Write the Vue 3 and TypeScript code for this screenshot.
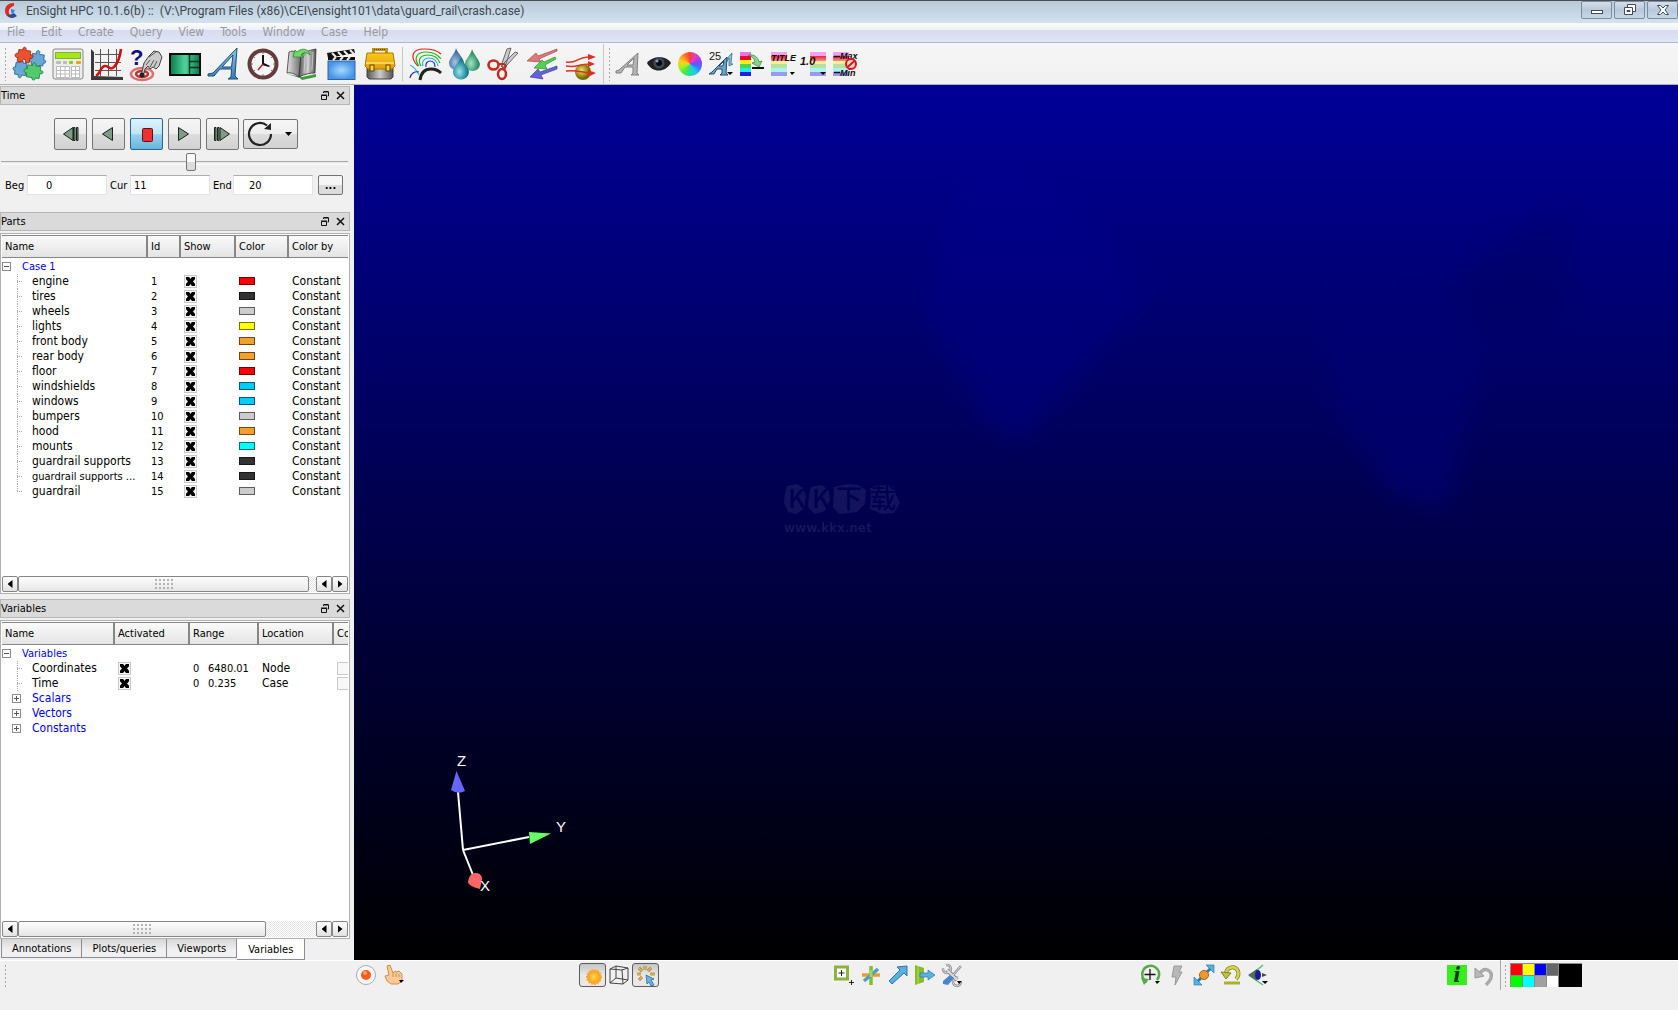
<script setup lang="ts">
import { ref } from 'vue'

interface Part {
  name: string
  id: number
  color: string
  shown: boolean
}

const menus = ['File', 'Edit', 'Create', 'Query', 'View', 'Tools', 'Window', 'Case', 'Help']

const parts = ref<Part[]>([
  { name: 'engine', id: 1, color: '#ff0000', shown: true },
  { name: 'tires', id: 2, color: '#333333', shown: true },
  { name: 'wheels', id: 3, color: '#cccccc', shown: true },
  { name: 'lights', id: 4, color: '#ffff00', shown: true },
  { name: 'front body', id: 5, color: '#f4a02c', shown: true },
  { name: 'rear body', id: 6, color: '#f4a02c', shown: true },
  { name: 'floor', id: 7, color: '#ff0000', shown: true },
  { name: 'windshields', id: 8, color: '#00ccff', shown: true },
  { name: 'windows', id: 9, color: '#00ccff', shown: true },
  { name: 'bumpers', id: 10, color: '#cccccc', shown: true },
  { name: 'hood', id: 11, color: '#f4a02c', shown: true },
  { name: 'mounts', id: 12, color: '#00ffff', shown: true },
  { name: 'guardrail supports', id: 13, color: '#333333', shown: true },
  { name: 'guardrail supports ...', id: 14, color: '#333333', shown: true },
  { name: 'guardrail', id: 15, color: '#cccccc', shown: true },
])

const variables = ref([
  { name: 'Coordinates', active: true, min: '0', max: '6480.01', location: 'Node' },
  { name: 'Time', active: true, min: '0', max: '0.235', location: 'Case' },
])
const groups = ['Scalars', 'Vectors', 'Constants']

const tabs = ['Annotations', 'Plots/queries', 'Viewports', 'Variables']
const activeTab = ref('Variables')

const begin = ref('0')
const current = ref('11')
const end = ref('20')
const step = ref(11)

const swatches = ['#ff0000', '#ffff00', '#0000ff', '#666666', '#00ff00', '#00ffff', '#a0a0a0', '#ffffff']
</script>

<template>
  <div class="app">
    <svg class="defs" aria-hidden="true">
      <defs>
        <linearGradient id="gGreen" x1="0" x2="1"><stop offset="0" stop-color="#067a50" /><stop offset=".5" stop-color="#4fd39a" /><stop offset="1" stop-color="#0a7a4a" /></linearGradient>
        <linearGradient id="gBlue" x1="0" y1="0" x2="0" y2="1"><stop offset="0" stop-color="#8cc8ec" /><stop offset="1" stop-color="#2f7fb4" /></linearGradient>
        <radialGradient id="gSky"><stop offset="0" stop-color="#a8d8ff" /><stop offset="1" stop-color="#4595e6" /></radialGradient>
        <linearGradient id="gGold" x1="0" y1="0" x2="0" y2="1"><stop offset="0" stop-color="#fbc81c" /><stop offset="1" stop-color="#e0a008" /></linearGradient>
        <linearGradient id="gSteel" x1="0" x2="1"><stop offset="0" stop-color="#555" /><stop offset=".5" stop-color="#ccc" /><stop offset="1" stop-color="#555" /></linearGradient>
        <linearGradient id="gPage" x1="0" x2="1"><stop offset="0" stop-color="#e4e4e4" /><stop offset="1" stop-color="#6c6c6c" /></linearGradient>
        <linearGradient id="gRainbow" x1="0" y1="0" x2="0" y2="1">
          <stop offset="0" stop-color="#f2a0f2" /><stop offset=".18" stop-color="#f2a0f2" /><stop offset=".18" stop-color="#ee2a3c" /><stop offset=".36" stop-color="#f08a8a" />
          <stop offset=".36" stop-color="#f6ee90" /><stop offset=".52" stop-color="#f3f0a4" /><stop offset=".52" stop-color="#b8e0a0" /><stop offset=".66" stop-color="#b8e0a0" />
          <stop offset=".66" stop-color="#a8f2f0" /><stop offset=".82" stop-color="#a8f2f0" /><stop offset=".82" stop-color="#9a9af0" /><stop offset="1" stop-color="#9a9af0" />
        </linearGradient>
        <radialGradient id="gDropA" cx=".4" cy=".65"><stop offset="0" stop-color="#a8c4e4" /><stop offset="1" stop-color="#3c6ca4" /></radialGradient>
        <radialGradient id="gDropB" cx=".4" cy=".65"><stop offset="0" stop-color="#a4e4c4" /><stop offset="1" stop-color="#2c8c64" /></radialGradient>
        <radialGradient id="gDropC" cx=".4" cy=".65"><stop offset="0" stop-color="#9ce4ec" /><stop offset="1" stop-color="#14808c" /></radialGradient>
        <radialGradient id="gBall" cx=".4" cy=".4"><stop offset="0" stop-color="#f0e860" /><stop offset="1" stop-color="#786c08" /></radialGradient>
        <radialGradient id="gSun"><stop offset="0" stop-color="#ffd84a" /><stop offset="1" stop-color="#f79a1c" /></radialGradient>
      </defs>
    </svg>

    <header class="titlebar">
      <svg class="logo" width="16" height="16" viewBox="0 0 16 16"><path d="M12 0C6 0 3 3 3 8c0 4 3 7 8 7l3-2C8 13 6 11 7 7c1-2 3-4 5-4z" fill="#e02a20" /><path d="M5 12c2 3 6 4 10 1l-3-3c-2 1-4 2-7 2z" fill="#284c9c" /><path d="M9 6l4 1-2 4-2-1z" fill="#3a8ccc" /></svg>
      <h1>EnSight HPC 10.1.6(b) ::&nbsp; (V:\Program Files (x86)\CEI\ensight101\data\guard_rail\crash.case)</h1>
      <div class="winctl">
        <button type="button" aria-label="Minimize"><svg width="14" height="10" viewBox="0 0 14 10"><rect x="1.500" y="5.500" width="11" height="3" fill="#fff" stroke="#444a58" /></svg></button>
        <button type="button" aria-label="Restore"><svg width="14" height="12" viewBox="0 0 14 12"><path d="M4.500 3.500v-3h8v7h-3" fill="#fff" stroke="#444a58" /><path d="M1.500 3.500h8v7h-8zM4 6.500h3v1H4z" fill="#fff" stroke="#444a58" /></svg></button>
        <button type="button" aria-label="Close"><svg width="14" height="12" viewBox="0 0 14 12"><path d="M1.500 1.500h3L7 4l2.500-2.500h3L9 6l3.500 4.500h-3L7 8l-2.500 2.500h-3L5 6z" fill="#fff" stroke="#444a58" /></svg></button>
      </div>
    </header>

    <nav class="menubar">
      <button v-for="m in menus" :key="m" type="button">{{ m }}</button>
    </nav>

    <div class="toolbar">
      <i class="grip"></i>
      <div class="tools big">
        <button type="button" aria-label="Parts">
          <svg viewBox="0 0 32 32">
            <g transform="rotate(8 16 16)" stroke-width=".8">
              <path d="M18 5h4c-2-4 4-5 3-1v1h5v5c3-1 3 4 0 3v3h-4c0 4-4 3-4 0h-4v-3c-4 1-4-4 0-3z" fill="#68a8d4" stroke="#2c6490" />
              <path d="M3 16h4c-2-4 4-4 3 0h4v4c4-1 4 4 0 3v5h-4c1 4-4 4-3 0H3v-4c-3 1-3-4 0-3z" fill="#68a8d4" stroke="#2c6490" />
              <path d="M4 3h4c-1-4 4-4 3 0h5v4c4-2 4 4 0 3v5h-4c1-4-4-4-3 0H4v-4c-4 1-4-5 0-4z" fill="#ee5030" stroke="#982810" />
              <path d="M15 17h5c-2-4 4-4 3 0h5v4c4-1 4 4 0 3v5h-4c1 3-4 3-3 0h-6v-4c-4 1-4-5 0-4z" fill="#50cc6c" stroke="#208040" />
            </g>
          </svg>
        </button>
        <button type="button" aria-label="Calculator">
          <svg viewBox="0 0 32 32">
            <rect x="1" y="1" width="30" height="30" rx="2" fill="#ececec" stroke="#888" /><rect x="3.500" y="4.500" width="25" height="6" fill="#a4e81c" stroke="#84b420" />
            <g fill="#bbb"><rect x="4" y="13" width="5" height="3" rx="1" /><rect x="11" y="13" width="4" height="3" rx="1" /><rect x="17" y="13" width="4" height="3" rx="1" fill="#8cc820" /><rect x="24" y="13" width="5" height="3" rx="1" fill="#f0a020" /></g>
            <path d="M4.500 18.500h13v11h-13zM19.500 18.500h8v11h-8zM8.500 18v11M13 18v11M4 22.500h13M4 26h13M23.500 18v11M19 22.500h9M19 26h9" fill="#fff" stroke="#bbb" />
          </svg>
        </button>
        <button type="button" aria-label="Plot">
          <svg viewBox="0 0 32 32"><path d="M4 6.500h26M4 14.500h26M4 22.500h26M9.500 1v27M17.500 1v27M25.500 1v27" stroke="#555" fill="none" /><path d="M0 1l3 3v24l29 1v3H0z" fill="#3a3a3a" /><path d="M5 28c4-2 5-10 9-10 5 0 4 5 9 1 4-4 6-10 7-18" fill="none" stroke="#d01010" stroke-width="2.600" /></svg>
        </button>
        <button type="button" aria-label="Query">
          <svg viewBox="0 0 32 32">
            <g fill="none" stroke="#d87070" stroke-width="2.500"><ellipse cx="12" cy="26" rx="11" ry="6" /><ellipse cx="12" cy="26" rx="6" ry="3" stroke="#c03030" /></g>
            <path d="M11 28l3-13 5-7 5-5 5 1 3 5-3 9-3 3-3-2-3 2-2-3-3 3-2 8z" fill="#ccc" stroke="#444" /><path d="M16 17l4-5M20 19l4-7M24 19l3-6M19 9l7-5" stroke="#555" fill="none" /><circle cx="12" cy="27" r="2.500" fill="#222" />
            <text x="0" y="17" font-family="Liberation Sans" font-weight="700" font-size="22" fill="#101080">?</text>
          </svg>
        </button>
        <button type="button" aria-label="Viewports">
          <svg viewBox="0 0 32 32"><rect x="1" y="6" width="30" height="21" fill="url(#gGreen)" stroke="#0a0a0a" stroke-width="2" /><path d="M20.500 7v19M21 13.500h9M21 19.500h9" stroke="#033822" stroke-width="1.500" /></svg>
        </button>
        <button type="button" aria-label="Annotation">
          <svg viewBox="0 0 32 32"><path d="M29 0l-2 28 3 3H20l3-2 .500-8H12l-6 7H0v-2l5-1zM14 19h9.500L25 7z" fill="url(#gBlue)" stroke="#1c4c74" /></svg>
        </button>
        <button type="button" aria-label="Time">
          <svg viewBox="0 0 32 32"><circle cx="16" cy="16" r="13.500" fill="#f6f6f6" stroke="#643c3c" stroke-width="4" /><path d="M16 4v2M16 26v2M4 16h2M26 16h2M7 9l1 1M25 9l-1 1M7 23l1-1M25 23l-1-1" stroke="#777" /><path d="M15 7l2 0v8l6 3-1 1-7-2z" fill="#111" /><path d="M16 16l-5 6" stroke="#c02020" stroke-width="1.500" /></svg>
        </button>
        <button type="button" aria-label="Flipbook">
          <svg viewBox="0 0 32 32"><path d="M1 26l13 4 2 2 14-3V26L16 29z" fill="#3c9c3c" /><path d="M3 4c4-2 8 0 12 3l-2 22C9 26 5 24 1 25z" fill="url(#gPage)" stroke="#333" stroke-width=".8" /><path d="M15 7c5-4 10-5 15-6l-1 24c-5 0-10 1-16 4z" fill="url(#gSteel)" stroke="#333" stroke-width=".8" /><path d="M19 8l-1 17M23 5l-1 18M27 4l-1 18" stroke="#ddd" stroke-width=".7" /><path d="M7 9L9 2l2 2c5-5 12-3 13 3-3-3-7-3-9 0l3 2z" fill="#70d868" stroke="#2c8c2c" stroke-width=".8" /></svg>
        </button>
        <button type="button" aria-label="Keyframe">
          <svg viewBox="0 0 32 32"><rect x="3" y="13" width="27" height="18.500" fill="url(#gSky)" stroke="#2c64a8" /><path d="M2 5l27-4 1 4-27 5zM3 9h27v3H3z" fill="#111" /><path d="M7 5l4 4M13 4l4 4M19 3l4 4M25 2l4 4M8 12l3-3M15 12l3-3M22 12l3-3" stroke="#eee" stroke-width="2" /></svg>
        </button>
        <button type="button" aria-label="Toolbox">
          <svg viewBox="0 0 32 32"><path d="M3 19h26v10l-2 2H5l-2-2z" fill="url(#gSteel)" stroke="#444" /><path d="M9.500 6V1.500h13V6" fill="none" stroke="#c49410" stroke-width="3" /><path d="M10 1.500h12" stroke="#604804" stroke-dasharray="1 1" /><path d="M3 5h26l2 13-3 3H4l-3-3z" fill="url(#gGold)" stroke="#a87804" /><path d="M2 15h28" stroke="#fbe070" stroke-width="1.500" /><rect x="6" y="17" width="4" height="6" fill="#f8d040" stroke="#604804" /><rect x="22" y="17" width="4" height="6" fill="#f8d040" stroke="#604804" /></svg>
        </button>
      </div>
      <i class="rule"></i>
      <div class="tools big">
        <button type="button" aria-label="Contours">
          <svg viewBox="0 0 32 32"><g fill="none" stroke-width="1.200"><path d="M9 18C1 10 2 1 15 1c8 0 14 2 17 5" stroke="#e02020" /><path d="M10 18C4 10 8 4 17 4c7 0 12 3 15 7M12 18C8 11 12 7 19 7c6 0 10 3 12 8" stroke="#20b820" /><path d="M14 18c-2-5 2-8 6-8 5 0 8 3 9 8M1 17c5 2 7 6 9 10" stroke="#18c4d0" /><path d="M17 19c-1-4 2-6 4-6 4 0 5 3 5 6M1 30c1-5 5-7 9-6" stroke="#2828c0" /></g><path d="M11 32c1-7 5-11 11-11 4 0 7 1 10 4" fill="none" stroke="#222" stroke-width="3" /></svg>
        </button>
        <button type="button" aria-label="Isosurfaces">
          <svg viewBox="0 0 32 32"><path d="M8 0c2 6 8 10 8 15a7.500 7 0 0 1-15 0C1 10 7 6 8 0z" fill="url(#gDropA)" /><path d="M24 1c2 6 7 10 8 15a7.500 7 0 0 1-15 0C17 11 23 7 24 1z" fill="url(#gDropB)" /><path d="M13 9c1 5 8 10 8 15a8 7.500 0 0 1-16 0c0-5 7-10 8-15z" fill="url(#gDropC)" /></svg>
        </button>
        <button type="button" aria-label="Clip">
          <svg viewBox="0 0 32 32"><path d="M14 18L20 1l4-1-5 16-3 4zM15 17L28 4l3 1-11 12-4 3z" fill="#ccc" stroke="#666" /><g fill="none" stroke="#c02c20" stroke-width="2.600"><ellipse cx="6.500" cy="17" rx="5" ry="4.500" /><ellipse cx="15" cy="26" rx="4" ry="5" /></g><path d="M11 16l6 0 2 2-2 4" fill="none" stroke="#c02c20" stroke-width="2" /></svg>
        </button>
        <button type="button" aria-label="Vector arrows">
          <svg viewBox="0 0 32 32" stroke-width=".6"><path d="M31 1l0 2-18 8 2 3-14-1 9-8 2 3z" fill="#e07878" stroke="#903c3c" /><path d="M29 9l1 2-11 6 2 4-13-1 8-8 2 2z" fill="#50d050" stroke="#288028" /><path d="M31 18l0 3-16 6 2 4-13-2 8-8 2 3z" fill="#6464d4" stroke="#303090" /></svg>
        </button>
        <button type="button" aria-label="Particle traces">
          <svg viewBox="0 0 32 32"><circle cx="18" cy="24" r="8" fill="url(#gBall)" /><path d="M1 14c11 2 12-6 24-5M1 18c11 2 12-2 24-2M1 23c11-1 14 1 24 2" fill="none" stroke="#e03020" stroke-width="1.500" /><path d="M23 6l8 3-8 3zM23 13l7 3-7 3zM23 22l8 3-8 4z" fill="#e03020" /></svg>
        </button>
      </div>
      <i class="rule far"></i>
      <i class="grip"></i>
      <div class="tools small">
        <button type="button" aria-label="Text style">
          <svg viewBox="0 0 24 24"><path d="M22 1l-1 20 2 2h-8l2-2v-6H9l-4 6H0v-2l3-1zM11 13h6l1-7z" fill="#b4b4b4" stroke="#808080" /></svg>
        </button>
        <button type="button" aria-label="Visibility">
          <svg viewBox="0 0 24 24"><path d="M0 11C5 4 19 3 24 11 18 21 5 21 0 11z" fill="#222" /><circle cx="12" cy="11" r="5.500" fill="#3c4858" /><circle cx="12" cy="11" r="3" fill="#05080c" /><circle cx="10" cy="9" r="1.500" fill="#8ca0b4" /></svg>
        </button>
        <button type="button" aria-label="Color"><span class="wheel"></span></button>
        <button type="button" aria-label="Text size">
          <svg viewBox="0 0 24 24"><path d="M23 1l-1 11h2l-4 2V6l-3 5h-3z" fill="#8cc0dc" stroke="#3c7090" stroke-width=".8" /><path d="M18 5l-1 16 2 2h-8l2-2v-4H8l-3 5H0l3-2zM10 14h4l1-5z" fill="#68a8cc" stroke="#244c6c" /><text x="0" y="8" font-family="Liberation Sans" font-size="11" fill="#111">25</text><path d="M18 20h6l-3 3z" fill="#000" /></svg>
        </button>
        <button type="button" aria-label="Legend">
          <svg viewBox="0 0 24 24"><path d="M0 0h11v4H0z" fill="#f070f0" /><path d="M0 4h11v4H0z" fill="#e81020" /><path d="M0 8h11v4H0z" fill="#f4f020" /><path d="M0 12h11v4H0z" fill="#48d848" /><path d="M0 16h11v4H0z" fill="#28e8f0" /><path d="M0 20h11v4H0z" fill="#2020e0" /><path d="M8 3c6-1 10 2 11 7l3-1-3 6-7-4 3-1C14 6 12 4 8 3z" fill="#8cd484" stroke="#38904c" stroke-width=".8" /><path d="M12 16h12" stroke="#111" stroke-width="2" /></svg>
        </button>
        <button type="button" aria-label="Legend title">
          <svg viewBox="0 0 24 24"><rect width="16" height="24" fill="url(#gRainbow)" /><text x="0" y="9" font-family="Liberation Sans" font-weight="700" font-style="italic" font-size="9" fill="#111">TITLE</text><path d="M19 20h5l-3 3z" fill="#000" /></svg>
        </button>
        <button type="button" aria-label="Legend format">
          <svg viewBox="0 0 24 24"><rect x="8" width="16" height="24" fill="url(#gRainbow)" /><text x="-2" y="13" font-family="Liberation Sans" font-weight="700" font-style="italic" font-size="11" fill="#111">1.0</text><path d="M18 20h6l-3 3z" fill="#000" /></svg>
        </button>
        <button type="button" aria-label="Legend extents">
          <svg viewBox="0 0 24 24"><rect width="16" height="24" fill="url(#gRainbow)" /><path d="M1 4.500h6M1 20.500h6" stroke="#111" stroke-width="1.500" /><g font-family="Liberation Sans" font-weight="700" font-style="italic" font-size="9" fill="#111"><text x="7" y="7">Max</text><text x="7" y="24">Min</text></g><circle cx="18" cy="12" r="5" fill="#f4d4cc" stroke="#d81818" stroke-width="2" /><path d="M14.500 15l7-6" stroke="#d81818" stroke-width="2" /></svg>
        </button>
      </div>
    </div>

    <main class="work">
      <aside class="dock">
        <section class="panel time">
          <h2><span>Time</span><svg width="24" height="9" viewBox="0 0 24 9"><path d="M2.500 2V1h5v4h-1M.500 4.500h5v4h-5zM0 4h6M2.500 .500h5" fill="none" stroke="#111" /><path d="M16 1l7 7M23 1l-7 7" stroke="#111" stroke-width="1.500" /></svg></h2>
          <div class="transport">
            <button type="button" aria-label="Step back"><svg width="18" height="16" viewBox="0 0 18 16"><path d="M1.500 8L11 1.500v13zM11.500 1.500h1.500v13h-1.500zM14.500 1.500H16v13h-1.500z" fill="#7f9c86" stroke="#18221a" /></svg></button>
            <button type="button" aria-label="Play backward"><svg width="18" height="16" viewBox="0 0 18 16"><path d="M2.500 8l10-6.500v13z" fill="#7f9c86" stroke="#18221a" /></svg></button>
            <button type="button" class="on" aria-label="Stop"><svg width="18" height="16" viewBox="0 0 18 16"><rect x="4.500" y="2.500" width="10" height="13" rx="1" fill="#ee3030" stroke="#601010" /></svg></button>
            <button type="button" aria-label="Play forward"><svg width="18" height="16" viewBox="0 0 18 16"><path d="M12.500 8l-10-6.500v13z" fill="#7f9c86" stroke="#18221a" /></svg></button>
            <button type="button" aria-label="Step forward"><svg width="18" height="16" viewBox="0 0 18 16"><path d="M15.500 8L6 1.500v13zM.500 1.500H2v13H.500zM3.500 1.500H5v13H3.500z" fill="#7f9c86" stroke="#18221a" /></svg></button>
            <button type="button" class="loop" aria-label="Loop mode"><svg width="46" height="26" viewBox="0 0 46 26"><path d="M23 13a11 11 0 1 1-4-8.500" fill="none" stroke="#222" stroke-width="2.200" /><path d="M23 2v7l-7-1z" fill="#222" /><path d="M37 11h7l-3.500 4z" fill="#000" /></svg></button>
          </div>
          <input v-model="step" class="slider" type="range" min="0" max="20" aria-label="Time step" />
          <div class="range">
            <label for="beg">Beg</label><input id="beg" v-model="begin" class="in-beg" type="text" />
            <label for="cur">Cur</label><input id="cur" v-model="current" class="in-cur" type="text" />
            <label for="end">End</label><input id="end" v-model="end" class="in-end" type="text" />
            <button type="button">...</button>
          </div>
        </section>

        <section class="panel parts">
          <h2><span>Parts</span><svg width="24" height="9" viewBox="0 0 24 9"><path d="M2.500 2V1h5v4h-1M.500 4.500h5v4h-5zM0 4h6M2.500 .500h5" fill="none" stroke="#111" /><path d="M16 1l7 7M23 1l-7 7" stroke="#111" stroke-width="1.500" /></svg></h2>
          <div class="frame">
            <div class="list">
              <table>
                <colgroup><col class="c146" /><col class="c33" /><col class="c55" /><col class="c53" /><col class="c59" /></colgroup>
                <thead><tr><th>Name</th><th>Id</th><th>Show</th><th>Color</th><th>Color by</th></tr></thead>
                <tbody>
                  <tr class="root"><td colspan="5"><i class="exp minus"></i>Case 1</td></tr>
                  <tr v-for="p in parts" :key="p.id">
                    <td class="leaf" :class="{ cut: p.name.endsWith('...') }">{{ p.name }}</td>
                    <td class="num">{{ p.id }}</td>
                    <td class="ctl"><input v-model="p.shown" type="checkbox" :aria-label="'Show ' + p.name" /></td>
                    <td class="ctl"><i class="chip" :style="{ backgroundColor: p.color }"></i></td>
                    <td>Constant</td>
                  </tr>
                </tbody>
              </table>
            </div>
            <div class="hbar">
              <button type="button" aria-label="Scroll left"><i class="tri left"></i></button>
              <div class="thumb wide"><i class="dots"></i></div>
              <div class="track"></div>
              <button type="button" aria-label="Page left"><i class="tri left"></i></button>
              <button type="button" aria-label="Scroll right"><i class="tri right"></i></button>
            </div>
          </div>
        </section>

        <section class="panel vars">
          <h2><span>Variables</span><svg width="24" height="9" viewBox="0 0 24 9"><path d="M2.500 2V1h5v4h-1M.500 4.500h5v4h-5zM0 4h6M2.500 .500h5" fill="none" stroke="#111" /><path d="M16 1l7 7M23 1l-7 7" stroke="#111" stroke-width="1.500" /></svg></h2>
          <div class="frame">
            <div class="list">
              <table>
                <colgroup><col class="c113" /><col class="c75" /><col class="c69" /><col class="c75" /><col class="c14" /></colgroup>
                <thead><tr><th>Name</th><th>Activated</th><th>Range</th><th>Location</th><th>Co</th></tr></thead>
                <tbody>
                  <tr class="root"><td colspan="5"><i class="exp minus"></i>Variables</td></tr>
                  <tr v-for="v in variables" :key="v.name">
                    <td class="leaf more">{{ v.name }}</td>
                    <td class="ctl"><input v-model="v.active" type="checkbox" :aria-label="'Activate ' + v.name" /></td>
                    <td class="num"><span class="min">{{ v.min }}</span>{{ v.max }}</td>
                    <td>{{ v.location }}</td>
                    <td class="ctl"><input type="checkbox" :aria-label="'Computed ' + v.name" /></td>
                  </tr>
                  <tr v-for="g in groups" :key="g" class="group"><td colspan="5"><i class="exp plus"></i>{{ g }}</td></tr>
                </tbody>
              </table>
            </div>
            <div class="hbar">
              <button type="button" aria-label="Scroll left"><i class="tri left"></i></button>
              <div class="thumb"><i class="dots"></i></div>
              <div class="track"></div>
              <button type="button" aria-label="Page left"><i class="tri left"></i></button>
              <button type="button" aria-label="Scroll right"><i class="tri right"></i></button>
            </div>
          </div>
          <div class="tabs" role="tablist">
            <button v-for="t in tabs" :key="t" type="button" role="tab" :aria-selected="t === activeTab" :class="{ active: t === activeTab }" @click="activeTab = t">{{ t }}</button>
          </div>
        </section>
      </aside>

      <section class="view" aria-label="Graphics window">
        <div class="glow a"></div>
        <div class="glow b"></div>
        <div class="glow c"></div>
        <div class="mark">
          <svg width="118" height="32" viewBox="0 0 118 32">
            <g fill="#fff" fill-opacity=".075"><path d="M3 3l10-2 6 4 3 8-2 12-7 6-9-2-4-9 1-10z" /><path d="M27 4l11-2 7 6 1 9-5 11-10 3-7-7 1-12z" /><path d="M50 4l14-3 10 1 8 5-1 14-8 8-18 2-6-7z" /><path d="M86 5l9-3 14 1 3 9 4 8-6 10-12 1-12-5 1-12z" /></g>
            <g fill="#000050" font-family="Noto Sans CJK SC, sans-serif" font-weight="500" font-size="26"><text x="4" y="25">K</text><text x="28" y="25">K</text><text x="52" y="25">下</text><text x="86" y="25">载</text></g>
          </svg>
          <p>www.kkx.net</p>
        </div>
        <svg class="axes" width="160" height="160" viewBox="0 0 160 160">
          <path d="M29 110L24 52M29 110l66-13M29 110l10 25" stroke="#fff" stroke-width="2" fill="none" />
          <path d="M22.500 31L17 50q7 5 14 1z" fill="#6666ff" /><path d="M117 93.500L95 92l1 12z" fill="#66ff66" /><path d="M34 142c1-6 3-9 8-9 4 0 6 3 6 6l-2 10q-12-3-12-7z" fill="#ff6666" />
          <g fill="#fff" font-family="Liberation Sans" font-size="15"><text x="23" y="26">Z</text><text x="122" y="92">Y</text><text x="46" y="151">X</text></g>
        </svg>
      </section>
    </main>

    <footer class="status">
      <div class="cell"><i class="grip"></i></div>
      <div class="cell">
        <button type="button" aria-label="Record"><svg viewBox="0 0 20 20"><circle cx="10" cy="10" r="9.500" fill="#f8f8f8" stroke="#aaa" /><circle cx="10" cy="10" r="5" fill="#fa5c1c" /><circle cx="9" cy="8" r="2" fill="#ff9c6c" /></svg></button>
        <button type="button" class="gap" aria-label="Pick"><svg viewBox="0 0 20 20"><path d="M2 1l3-1 3 8 2-2 2 1 2-1 2 2 1 1v7l-4 3H6l-4-3-2-5 4-1z" fill="#f8cc94" stroke="#d08c4c" /><path d="M8 8v4M11 8v4M14 9v3" stroke="#d08c4c" /><path d="M14 15h5l-3 3z" /></svg></button>
      </div>
      <div class="cell tight">
        <button type="button" class="press" aria-label="Shading"><svg viewBox="0 0 20 20"><circle cx="11" cy="12" r="7" fill="url(#gSun)" stroke="#f8ac3c" stroke-width="2" stroke-dasharray="2 1" /></svg></button>
        <button type="button" aria-label="Hidden line"><svg viewBox="0 0 20 20"><path d="M1 4l6-3 12 2v12l-5 4-13-1zM1 4l12 1 6-2M13 5l1 14M7 1v12l12 2M7 13l-6 5" fill="none" stroke="#444" /></svg></button>
        <button type="button" class="press" aria-label="Highlight"><svg viewBox="0 0 20 20"><g stroke="#705010" stroke-width="2.600"><path d="M9 1v4M1 9h4M14 9h5M3 3l3 3M15 3l-3 3M3 15l3-3" /></g><g stroke="#f8c838" stroke-width="1.600"><path d="M9 1v4M1 9h4M14 9h5M3 3l3 3M15 3l-3 3M3 15l3-3" /></g><path d="M10 10l8 4-3 1 3 5-3 1-2-4-2 2z" fill="#68b4e4" stroke="#205c90" stroke-width=".7" /></svg></button>
      </div>
      <div class="cell">
        <button type="button" aria-label="Add viewport"><svg viewBox="0 0 20 20"><rect x="1.500" y="2" width="12" height="12" fill="#fff" stroke="#8cb43c" stroke-width="3" /><path d="M7.500 5v6M4.500 8h6M17.500 15v5M15 17.500h5" stroke="#222" /></svg></button>
        <button type="button" aria-label="Axis triad"><svg viewBox="0 0 20 20"><path d="M10 1v19" stroke="#84bc34" stroke-width="3.500" /><path d="M1 10h18" stroke="#f09c30" stroke-width="3.500" /><path d="M3 16L17 4" stroke="#48a0cc" stroke-width="3.500" /><path d="M10 5v7" stroke="#a4d454" stroke-width="3" /></svg></button>
        <button type="button" aria-label="Cursor"><svg viewBox="0 0 20 20"><path d="M19 1v10l-3-3L4 19l-3-3L12 5 9 2z" fill="#5cb0e0" stroke="#2874a8" /></svg></button>
        <button type="button" aria-label="Plane"><svg viewBox="0 0 20 20"><path d="M0 0l9 3v14l-9 3z" fill="#84bc2c" /><path d="M3 1v18" stroke="#b4e054" /><path d="M5 8h8V5l7 5-7 5v-3H5z" fill="#5cb0e0" stroke="#2c78a0" stroke-width=".7" /></svg></button>
        <button type="button" aria-label="Settings"><svg viewBox="0 0 20 20"><g fill="none" stroke="#8c8c8c"><path d="M5 5l10 10" stroke-width="4" /><path d="M1 3a4 4 0 1 0 3-3" stroke-width="2.500" /><path d="M19 17a4 4 0 1 1-3-4" stroke-width="2.500" /><path d="M19 1l-8 9" stroke-width="2.500" /></g><g fill="none" stroke="#dcdcdc"><path d="M5 5l10 10" stroke-width="2" /><path d="M1 3a4 4 0 1 0 3-3M19 17a4 4 0 1 1-3-4M19 1l-8 9" /></g><path d="M8 10l4 3-6 7-5-1 0-3z" fill="#4c84cc" /><path d="M15 16h5l-3 3z" /></svg></button>
      </div>
      <div class="cell">
        <button type="button" aria-label="Center view"><svg viewBox="0 0 20 20"><path d="M7 17a8.500 8.500 0 1 1 10-2" fill="none" stroke="#5ca84c" stroke-width="2.500" /><path d="M1 13l8 1-5 6z" fill="#5ca84c" /><path d="M10 4v11M4.500 9.500h11" stroke="#111" stroke-width="1.300" /><path d="M15 16h5l-3 3z" /></svg></button>
        <button type="button" aria-label="Fast display"><svg viewBox="0 0 20 20"><path d="M7 1h8l-3 6h3L8 20l1-8H5z" fill="#b8b8b8" stroke="#999" /></svg></button>
        <button type="button" aria-label="Fit"><svg viewBox="0 0 20 20"><path d="M2 18L18 2" stroke="#2c7cac" stroke-width="3" /><path d="M0 12v8h8zM12 0h8v8z" fill="#5cb0e0" stroke="#2c7cac" stroke-width=".7" /><circle cx="10" cy="10" r="4.500" fill="#f09830" stroke="#b45c10" /></svg></button>
        <button type="button" aria-label="Reset view"><svg viewBox="0 0 20 20"><path d="M5 8C6 2 14 0 17 6c1 3 0 6-2 8" fill="none" stroke="#84842c" stroke-width="4" /><path d="M5 8C6 2 14 0 17 6c1 3 0 6-2 8" fill="none" stroke="#d4d44c" stroke-width="2.500" /><path d="M0 7l10 1-5 6z" fill="#b8c43c" stroke="#84842c" /><path d="M3 18h16" stroke="#a8b034" stroke-width="3" /></svg></button>
        <button type="button" aria-label="View direction"><svg viewBox="0 0 20 20"><path d="M15 0L2 11l13 9" fill="none" stroke="#50c070" stroke-width="1.500" /><path d="M0 10l9-6v12z" fill="#546c5c" /><ellipse cx="10" cy="10" rx="3" ry="5" fill="#181c90" /><path d="M14 8l5 2-5 2z" fill="#446" /><path d="M14 16h6l-3 3z" /></svg></button>
      </div>
      <div class="cell">
        <button type="button" class="info" aria-label="Information">i</button>
        <button type="button" aria-label="Undo"><svg viewBox="0 0 20 20"><path d="M6 8c5-7 13-2 11 5-1 3-3 5-5 7" fill="none" stroke="#aaa" stroke-width="3.500" /><path d="M1 3v10l9-2z" fill="#b8b8b8" stroke="#999" /></svg></button>
        <i class="rule"></i>
        <i class="grip near"></i>
        <div class="palette">
          <div class="swatches"><button v-for="s in swatches" :key="s" type="button" :aria-label="s" :style="{ backgroundColor: s }"></button></div>
          <div class="current"></div>
        </div>
      </div>
    </footer>
  </div>
</template>

<style>
body { background: #f0f0f0; }
</style>

<style scoped>
* { box-sizing: border-box; }
.app { display: flex; flex-direction: column; min-height: 100vh; background: #f0f0f0; color: #000; font: 11px/15px "DejaVu Sans Condensed", "DejaVu Sans", sans-serif; }
.defs { position: absolute; width: 0; height: 0; }
button { padding: 0; margin: 0; border: 0; background: none; color: inherit; font: inherit; }
svg { display: block; overflow: visible; }
h1, h2, p { margin: 0; font: inherit; }

.titlebar { display: flex; align-items: center; height: 23px; padding: 0 0 2px 2px; border-top: 1px solid #4c4c54; background: linear-gradient(#bac9d8, #d3e2ef); color: #3c4650; }
.titlebar h1 { flex: 1; margin-left: 8px; font: 12px/15px Roboto, sans-serif; white-space: nowrap; }
.winctl { display: flex; align-self: flex-start; gap: 2px; }
.winctl button { display: grid; place-items: center; width: 31px; height: 18px; border: 1px solid #7c8ca0; border-radius: 2px; background: linear-gradient(#d4deea, #b8c8da 50%, #c8d8e8); }

.menubar { display: flex; gap: 16px; height: 20px; padding-left: 7px; border-bottom: 1px solid #b0b8cc; background: linear-gradient(#fbfbfd, #eef0f7 35%, #d6dbee 40%, #e0e6f5); color: #9a9a9c; font-size: 12px; }
.toolbar { display: flex; align-items: center; height: 42px; padding-left: 4px; border-bottom: 1px solid #b0b0b0; background: linear-gradient(#f6f6f6, #f0f0f0); }
.grip { width: 3px; height: 34px; background: radial-gradient(circle, #a8a8a8 1px, transparent 1px) 0 0 / 3px 4px; }
.rule { width: 1px; height: 34px; background: #c8c8c8; }
.tools { display: flex; gap: 7px; }
.tools.big { margin: 0 6px; }
.tools.big svg { width: 32px; height: 32px; }
.rule.far { height: 40px; margin: 0 4px 0 0; }
.tools.small { margin-left: 5px; }
.tools.small svg { width: 24px; height: 24px; }
.wheel { display: block; width: 24px; height: 24px; border-radius: 50%; background: conic-gradient(#ff3c3c, #e040c0, #9040ff, #4070ff, #20c8f0, #20e0a0, #50e840, #b0f020, #ffd020, #ff8020, #ff3c3c); }

.work { flex: 1; display: flex; gap: 4px; }
.dock { flex: none; display: flex; flex-direction: column; width: 350px; padding-top: 1px; }
.panel h2 { display: flex; align-items: center; justify-content: space-between; height: 19px; padding: 0 4px 0 0; border: 1px solid #b6b6b6; background: #dadada; }
.time { height: 126px; }
.transport { display: flex; align-items: center; gap: 5px; margin: 13px 0 0 54px; }
.transport button { display: grid; place-items: center; width: 33px; height: 32px; border: 1px solid #747474; border-radius: 2px; background: linear-gradient(#f6f6f6, #ededed 50%, #dcdcdc 52%, #d2d2d2); }
.transport .on { border-color: #2c628b; background: linear-gradient(#def2fc, #c0e4f8 50%, #98d2f0 52%, #68b4dc); }
.transport .loop { width: 55px; height: 30px; margin-left: -1px; }
.slider { display: block; width: 347px; height: 19px; margin: 2px 1px 4px; appearance: none; background: linear-gradient(#a8a8a8, #a8a8a8) 0 9px / 100% 1px no-repeat, linear-gradient(#e4e8e8, #fff) 0 10px / 100% 3px no-repeat; }
.slider::-webkit-slider-thumb { appearance: none; width: 10px; height: 18px; border: 1px solid #747474; border-radius: 2px; background: linear-gradient(#fafafa 50%, #dcdcdc 52%); }
.range { display: flex; align-items: center; padding-left: 5px; }
.range label { width: 22px; }
.range label + input + label { width: 20px; }
.range input { width: 80px; height: 20px; margin-right: 3px; padding: 0; border: 1px solid #e2e3ea; border-top-color: #abadb3; background: #fff; font: inherit; }
.range .in-beg { padding-left: 18px; }
.range .in-cur { padding-left: 3px; }
.range .in-end { padding-left: 15px; }
.range button { width: 25px; height: 20px; margin-left: 2px; border: 1px solid #747474; border-radius: 2px; background: linear-gradient(#f6f6f6 50%, #dcdcdc 52%); font-weight: 700; }

.frame { display: flex; flex-direction: column; margin-top: 2px; padding: 1px; border: 1px solid #b0b0b0; background: #fff; }
.list { overflow: hidden; }
.parts .list { height: 341px; }
.parts { margin-bottom: 5px; }
.vars { flex: 1; display: flex; flex-direction: column; }
.vars .frame { flex: 1; }
.vars .list { flex: 1; }
table { width: 346px; table-layout: fixed; border-collapse: separate; border-spacing: 0; }
.c146 { width: 146px; } .c33 { width: 33px; } .c55 { width: 55px; } .c53 { width: 53px; } .c59 { width: 59px; }
.c113 { width: 113px; } .c75 { width: 75px; } .c69 { width: 69px; } .c14 { width: 14px; }
th { height: 23px; padding: 0 0 0 3px; border-right: 2px solid #868686; border-bottom: 1px solid #868686; border-top: 1px solid #868686; background: linear-gradient(#fafafa, #e4e4e4); font-weight: 400; text-align: left; white-space: nowrap; overflow: hidden; }
th:last-child { border-right: 0; }
td { height: 15px; padding: 0 0 0 3px; font-size: 12px; white-space: nowrap; overflow: hidden; }
td.num, td.cut { font-size: 11px; }
.root td { height: 16px; padding-left: 0; color: #0000f0; font-size: 11px; }
.group td { padding-left: 10px; color: #0000f0; }
.exp { display: inline-block; width: 9px; height: 9px; margin-right: 11px; border: 1px solid #8c8c8c; vertical-align: -1px; background: linear-gradient(#555, #555) center / 5px 1px no-repeat; }
.exp.plus { background: linear-gradient(#555, #555) center / 5px 1px no-repeat, linear-gradient(#555, #555) center / 1px 5px no-repeat; }
td.leaf { padding-left: 30px; background: repeating-linear-gradient(90deg, #aaa 0 1px, transparent 1px 2px) 15px 7px / 5px 1px no-repeat, repeating-linear-gradient(#aaa 0 1px, transparent 1px 2px) 15px 0 / 1px 100% no-repeat; }
tr:last-child td.leaf { background-size: 5px 1px, 1px 8px; }
td.ctl { font-size: 0; line-height: 0; }
td input { display: inline-block; width: 13px; height: 13px; margin: 0; appearance: none; border: 1px solid #c8c8c8; background: #f8f8f8; vertical-align: middle; }
td input:checked::before { content: ""; display: block; width: 9px; height: 9px; margin: 1px; background: #000; clip-path: polygon(0 0, 35% 0, 50% 22%, 65% 0, 100% 0, 100% 25%, 78% 50%, 100% 75%, 100% 100%, 65% 100%, 50% 78%, 35% 100%, 0 100%, 0 75%, 22% 50%, 0 25%); }
.chip { display: inline-block; width: 16px; height: 8px; margin-bottom: 2px; border: 1px solid rgba(0, 0, 0, .55); vertical-align: middle; }
.min { display: inline-block; width: 15px; }
.hbar { display: flex; height: 16px; }
.hbar button { display: grid; place-items: center; width: 16px; border: 1px solid #868686; border-radius: 2px; background: linear-gradient(#fff, #e2e2e2); }
.thumb { display: grid; place-items: center; width: 248px; border: 1px solid #868686; border-radius: 2px; background: linear-gradient(#fdfdfd, #e6e6e6); }
.thumb.wide { width: 291px; }
.dots { width: 20px; height: 12px; background: radial-gradient(circle, #b4b4b4 1px, transparent 1px) 0 0 / 4px 4px; }
.track { flex: 1; background: repeating-conic-gradient(#e4e4e4 0 25%, #fff 0 50%) 0 0 / 2px 2px; }
.tri { width: 5px; height: 8px; background: #000; }
.tri.left { clip-path: polygon(100% 0, 100% 100%, 0 50%); }
.tri.right { clip-path: polygon(0 0, 0 100%, 100% 50%); }
.tabs { display: flex; align-items: flex-start; height: 21px; padding-left: 1px; }
.tabs button { height: 19px; padding: 1px 10px 0; border: 1px solid #8c8c96; border-top: 0; border-left-width: 0; background: linear-gradient(#d6d6d6, #f0f0f0 60%); white-space: nowrap; }
.tabs button:first-child { border-left-width: 1px; }
.tabs .active { height: 21px; padding: 1px 11px 0; background: #fff; }

.view { position: relative; flex: 1; overflow: hidden; background: linear-gradient(#000098, #000); }
.glow { position: absolute; filter: blur(12px); }
.glow::before { content: ""; display: block; height: 100%; }
.glow.a { left: 43%; top: 9%; width: 230px; height: 280px; }
.glow.a::before { background: linear-gradient(rgba(0, 0, 200, .06), rgba(0, 0, 220, .17)); clip-path: polygon(20% 0, 60% 10%, 100% 45%, 42% 100%, 26% 92%, 0 50%); }
.glow.b { left: 72%; top: 22%; width: 190px; height: 230px; }
.glow.b::before { background: linear-gradient(rgba(0, 0, 190, 0), rgba(0, 0, 220, .18)); clip-path: polygon(0 0, 100% 10%, 74% 100%, 46% 95%, 16% 60%); }
.glow.c { left: 83%; top: 14%; width: 120px; height: 130px; }
.glow.c::before { background: rgba(0, 0, 40, .12); clip-path: polygon(100% 0, 95% 80%, 20% 100%, 0 60%, 40% 25%); }
.mark { position: absolute; left: 430px; top: 398px; }
.mark p { margin-top: 7px; color: rgba(255, 255, 255, .09); font: 700 12px/13px "DejaVu Sans", sans-serif; }
.axes { position: absolute; left: 80px; bottom: 60px; }

.status { display: grid; grid-template-columns: 356px 223fr 255fr 306fr 307fr 231px; height: 50px; border-top: 1px solid #fff; background: #f0f0f0; }
.cell { display: flex; align-items: center; gap: 7px; height: 26px; margin-top: 1px; }
.cell svg { width: 20px; height: 20px; }
.cell .gap { margin-left: 2px; }
.cell .grip { height: 23px; margin-left: 4px; }
.cell .grip.near { margin: 0 -4px 0 0; }
.cell.tight { gap: 3px; }
.press { display: grid; place-items: center; width: 27px; height: 24px; border: 1px solid #5c5c5c; border-radius: 3px; background: linear-gradient(#c4c4c4, #e8e8e8 50%); }
.info { width: 20px; height: 20px; background: #38ec20; color: #0c3c10; font: italic 700 20px/20px "DejaVu Serif", serif; }
.cell .rule { height: 30px; margin: 0 -4px 0 -1px; background: #aaa; }
.palette { display: flex; width: 72px; height: 24px; border-top: 1px solid #888; background: #888; }
.swatches { display: grid; grid-template-columns: repeat(4, 11px); grid-auto-rows: 11px; gap: 1px; padding-left: 1px; }
.current { flex: 1; margin-left: 1px; background: #000; }
</style>
